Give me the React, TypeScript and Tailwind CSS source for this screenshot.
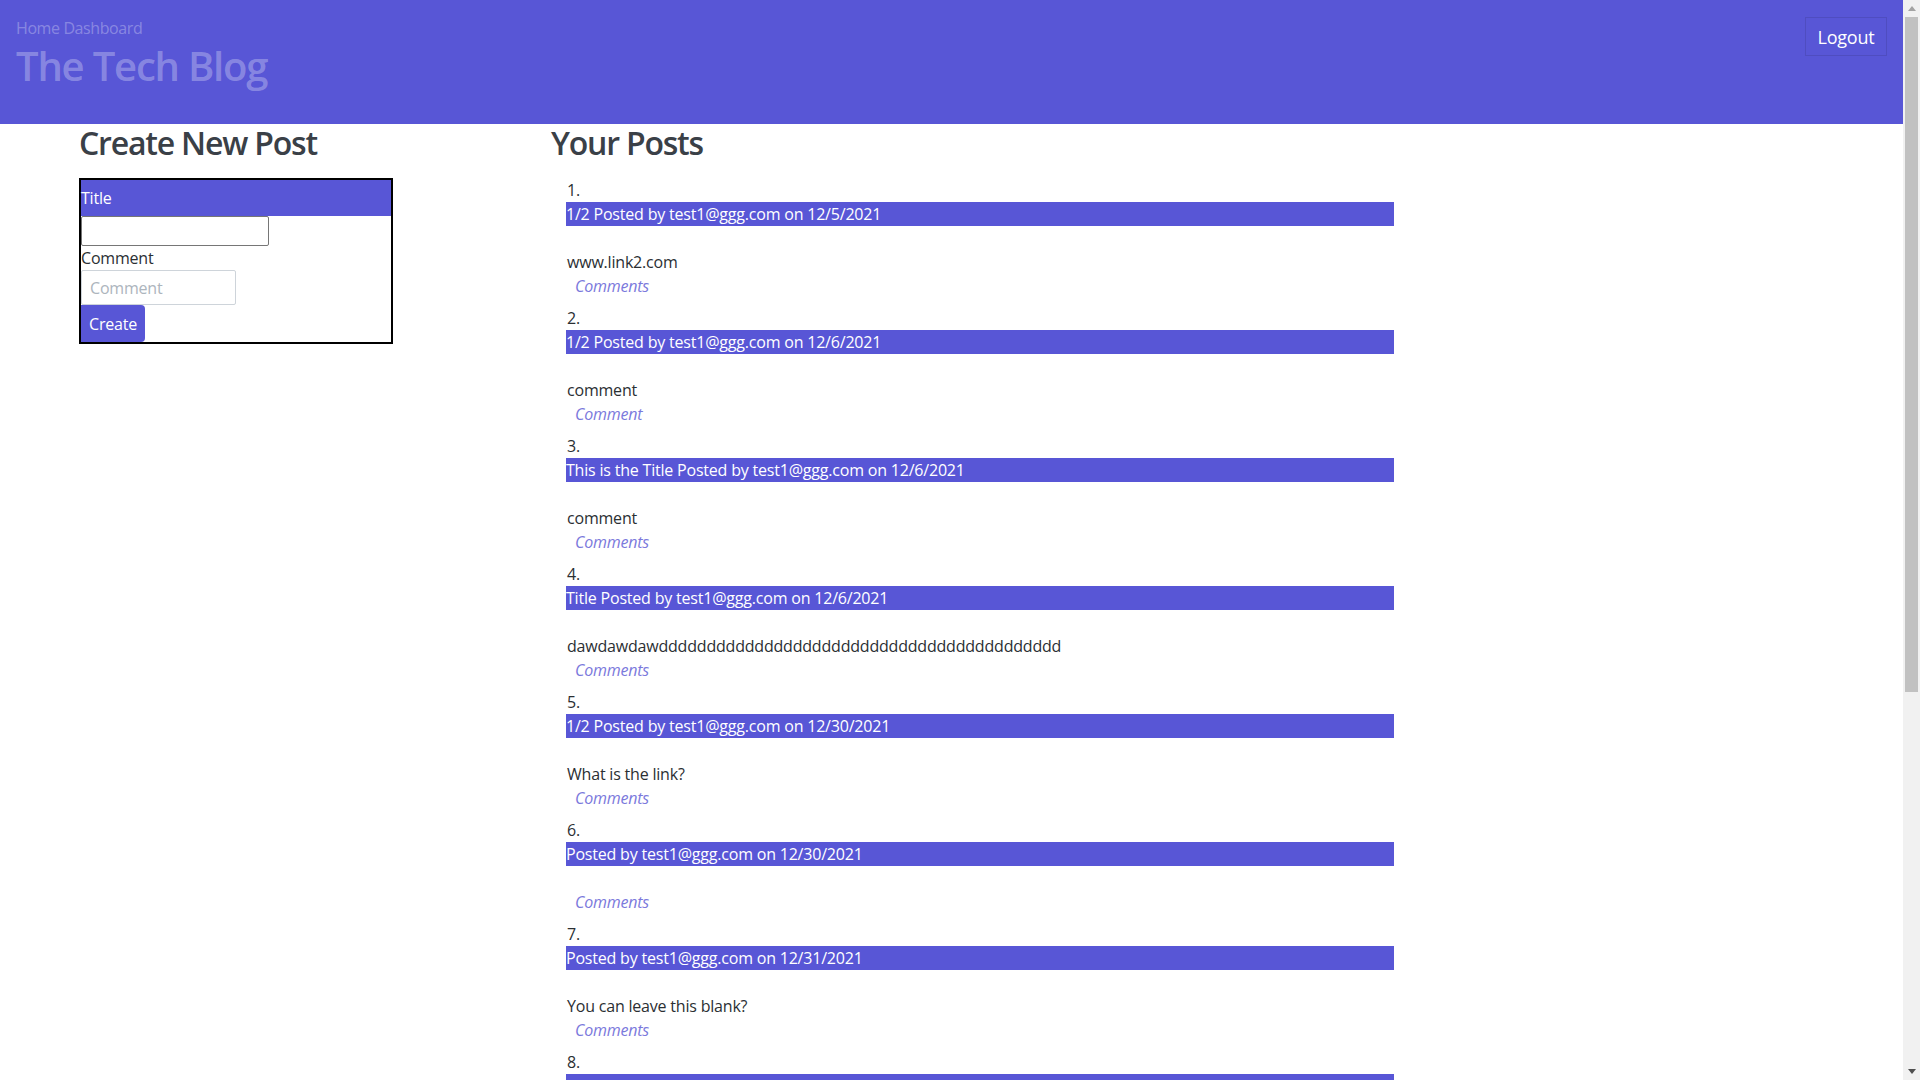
const posts = [
  { title: '1/2 Posted by test1@ggg.com on 12/5/2021', body: 'www.link2.com', link: 'Comments' },
  { title: '1/2 Posted by test1@ggg.com on 12/6/2021', body: 'comment', link: 'Comment' },
  { title: 'This is the Title Posted by test1@ggg.com on 12/6/2021', body: 'comment', link: 'Comments' },
  {
    title: 'Title Posted by test1@ggg.com on 12/6/2021',
    body: 'dawdawdaw' + 'd'.repeat(42),
    link: 'Comments',
  },
  { title: '1/2 Posted by test1@ggg.com on 12/30/2021', body: 'What is the link?', link: 'Comments' },
  { title: 'Posted by test1@ggg.com on 12/30/2021', body: '', link: 'Comments' },
  { title: 'Posted by test1@ggg.com on 12/31/2021', body: 'You can leave this blank?', link: 'Comments' },
  { title: 'Posted by test1@ggg.com on 1/2/2022', body: 'Another post', link: 'Comments' },
]

const App = () => {
  return (
    <div className="flex h-screen overflow-hidden bg-white text-[#2b2f33] font-['Open_Sans',sans-serif] text-base leading-6 tracking-[-0.2px]">
      <div className="flex-1 min-w-0">
        {/* Header */}
        <header className="h-[124px] bg-[#5856d6] flex justify-between pl-4 pr-4 pt-4">
          <div>
            <nav className="text-white/30 text-base leading-6 tracking-[-0.4px]">Home Dashboard</nav>
            <h1 className="text-white/30 text-[40px] leading-[48px] font-semibold mt-[2px] tracking-[-1.2px]">
              The Tech Blog
            </h1>
          </div>
          <button className="mt-px h-[39px] w-[82px] border border-black/10 text-white text-[18px] leading-none">
            Logout
          </button>
        </header>

        <main className="flex">
          {/* Create New Post */}
          <section className="w-[552px] pl-[79px] shrink-0">
            <h2 className="text-[32px] leading-[38px] font-semibold text-[#3a4047] mb-4 tracking-[-1.2px]">
              Create New Post
            </h2>
            <form className="w-[314px] border-2 border-black flex flex-col items-start">
              <label className="w-full h-[36px] bg-[#5856d6] text-white flex items-center">Title</label>
              <input className="w-[188px] h-[30px] border border-[#767676] rounded-[2px]" />
              <label className="leading-6">Comment</label>
              <input
                placeholder="Comment"
                className="w-[155px] h-[35px] border border-[#ced4da] px-2 placeholder:text-[#adb5bd] rounded-[2px]"
              />
              <button type="button" className="h-[37px] px-2 bg-[#5856d6] text-white rounded-r-[4px]">
                Create
              </button>
            </form>
          </section>

          {/* Your Posts */}
          <section className="flex-1">
            <h2 className="text-[32px] leading-[38px] font-semibold text-[#3a4047] mb-4 -ml-px tracking-[-1.2px]">
              Your Posts
            </h2>
            <ol className="pl-[14px]">
              {posts.map((post, i) => (
                <li key={i} className="mb-2">
                  <div className="leading-6 pl-px">{i + 1}.</div>
                  <div className="w-[828px] h-6 bg-[#5856d6] text-white leading-6">{post.title}</div>
                  <div className="h-6"></div>
                  {post.body && <p className="leading-6 pl-px">{post.body}</p>}
                  <a className="block leading-6 pl-[9px] italic text-[#7b79dc]">{post.link}</a>
                </li>
              ))}
            </ol>
          </section>
        </main>
      </div>

      {/* browser scrollbar */}
      <div className="w-[17px] shrink-0 bg-[#f1f1f1] flex flex-col items-center">
        <div className="h-[17px] flex items-center justify-center">
          <svg width="8" height="5" viewBox="0 0 8 5">
            <path d="M0 5 L4 0 L8 5 Z" fill="#a3a3a3" />
          </svg>
        </div>
        <div className="w-[13px] h-[675px] bg-[#c1c1c1]"></div>
        <div className="flex-1"></div>
        <div className="h-[17px] flex items-center justify-center">
          <svg width="8" height="5" viewBox="0 0 8 5">
            <path d="M0 0 L8 0 L4 5 Z" fill="#505050" />
          </svg>
        </div>
      </div>
    </div>
  )
}

export default App
